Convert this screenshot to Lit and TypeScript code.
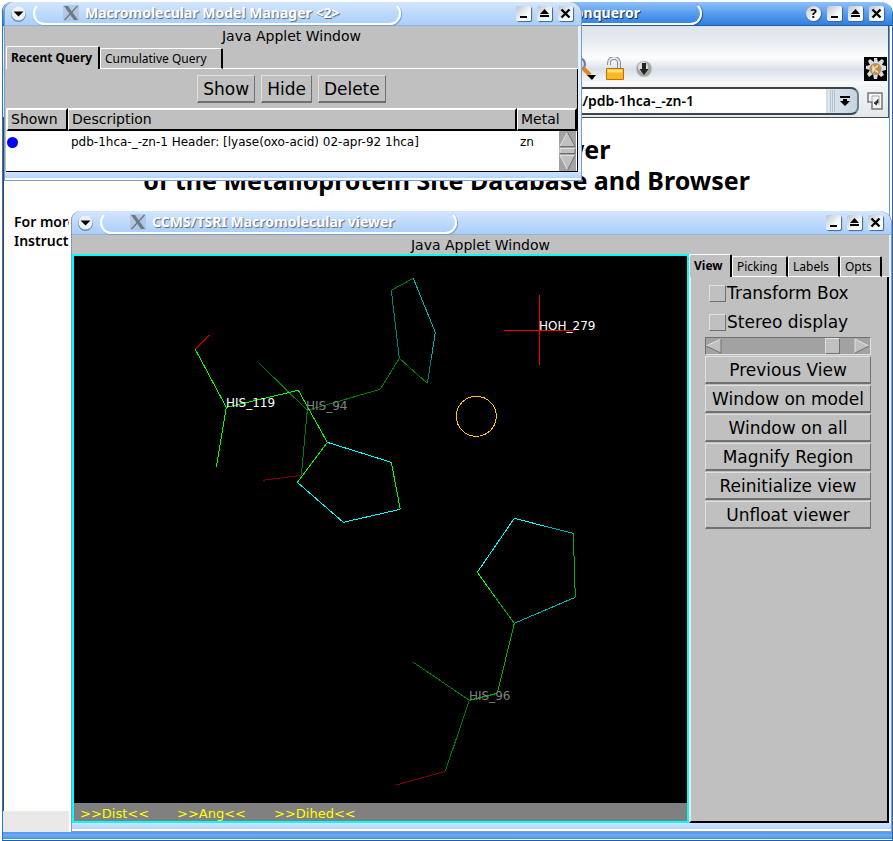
import { LitElement, html, css, svg } from "lit";
import { customElement, property } from "lit/decorators.js";

type Bond = [number, number, number, number, string];

const GREEN = "#00ff00";
const MID_GREEN = "#00b200";
const DARK_GREEN = "#008000";
const CYAN = "#00ffff";
const MID_CYAN = "#00b2b2";
const DARK_CYAN = "#008080";

const BONDS: Bond[] = [
  // HIS 94
  [391, 290, 413, 278, DARK_GREEN],
  [413, 278, 435, 332, MID_CYAN],
  [435, 332, 431, 358, MID_CYAN],
  [431, 358, 427, 383, DARK_CYAN],
  [427, 383, 399, 358, DARK_GREEN],
  [399, 358, 391, 290, DARK_CYAN],
  [399, 358, 380, 389, DARK_GREEN],
  [380, 389, 307, 410, DARK_GREEN],
  [307, 410, 259, 363, DARK_GREEN],
  [307, 410, 301, 475, DARK_GREEN],
  [301, 475, 263, 480, "#800000"],
  // HIS 119
  [195, 349, 209, 335, "#b20000"],
  [195, 349, 226, 407, GREEN],
  [226, 407, 216, 467, GREEN],
  [226, 407, 298, 390, GREEN],
  [298, 390, 327, 442, GREEN],
  [327, 442, 391, 462, CYAN],
  [391, 462, 400, 509, GREEN],
  [400, 509, 343, 522, CYAN],
  [343, 522, 297, 482, CYAN],
  [297, 482, 327, 442, GREEN],
  // HIS 96
  [514, 518, 545, 526, CYAN],
  [545, 526, 573, 533, MID_CYAN],
  [573, 533, 575, 597, MID_GREEN],
  [575, 597, 514, 623, MID_CYAN],
  [514, 623, 495, 597, MID_GREEN],
  [495, 597, 477, 572, GREEN],
  [477, 572, 514, 518, CYAN],
  [514, 623, 497, 693, MID_GREEN],
  [497, 693, 469, 700, MID_GREEN],
  [469, 700, 413, 662, DARK_GREEN],
  [469, 700, 445, 771, DARK_GREEN],
  [445, 771, 395, 785, "#800000"],
  // HOH 279
  [504, 330, 574, 330, "#ff0000"],
  [539, 295, 539, 365, "#ff0000"],
];

const ATOM_LABELS: [number, number, string, string][] = [
  [226, 407, "HIS_119", "#ffffff"],
  [306, 410, "HIS_94", "#808080"],
  [469, 700, "HIS_96", "#808080"],
  [539, 330, "HOH_279", "#ffffff"],
];

const buttonGlyphs: Record<string, unknown> = {
  Minimize: svg`<path d="M4 10h7v2H4z" />`,
  Maximize: svg`<path d="M7.5 3L12 8H3zM3 9h9v2H3z" />`,
  Close: svg`<path d="M3.5 3.5l8 8M11.5 3.5l-8 8" stroke="#000" stroke-width="2.4" />`,
};

@customElement("title-bar")
class TitleBar extends LitElement {
  @property() text = "";
  @property({ type: Boolean, reflect: true }) active = false;

  static styles = css`
    :host {
      display: flex;
      align-items: center;
      box-sizing: border-box;
      height: 24px;
      flex: none;
      padding: 0 8px 0 6px;
      border-radius: 9px 12px 0 0;
      border-bottom: 1px solid #8fb5dc;
      background: linear-gradient(#d3e6fd, #bddafb 50%, #a9cffa);
      font-family: "Noto Sans", sans-serif;
    }
    :host([active]) {
      padding: 0 8px 0 28px;
      border-bottom-color: #1b5dab;
      background: linear-gradient(#8fc1f8, #5da0f0 45%, #2f7fe0);
    }
    .menu {
      width: 15px;
      height: 15px;
      padding: 0;
      border: 0;
      background: none;
      display: block;
    }
    .pill {
      display: flex;
      align-items: center;
      gap: 6px;
      box-sizing: border-box;
      height: 23px;
      margin-left: 7px;
      padding: 0 60px 1px 28px;
      border: 2px solid #fff;
      border-top-color: transparent;
      border-radius: 12px;
      box-shadow: 1px 1px 1px #7d9fc4;
    }
    :host([active]) .pill {
      width: 671px;
      margin-left: 0;
      justify-content: flex-end;
      box-shadow: 1px 1px 1px #1c57a0;
    }
    .text {
      color: #fff;
      font-size: 14px;
      font-weight: 700;
      line-height: 18px;
      white-space: nowrap;
      text-shadow: 1px 1px 1px #56687d;
    }
    :host([active]) .text {
      text-shadow: 1px 1px 1px #102e58;
    }
    .space {
      flex: 1;
    }
    .buttons {
      display: flex;
      gap: 6px;
    }
    .button {
      width: 15px;
      height: 15px;
      padding: 0;
      border: 0;
      border-radius: 2px;
      background: linear-gradient(135deg, #b9c4d0, #f6f8fa 60%, #fff);
      box-shadow: 1px 1px 1px #42648c;
    }
    .help {
      border-radius: 8px;
      font: 700 13px/15px "Noto Sans", sans-serif;
      color: #000;
    }
    .button svg {
      display: block;
    }
  `;

  render() {
    return html`
      ${this.active
        ? null
        : html`<button class="menu" aria-label="Window menu">
            <svg width="15" height="16" viewBox="0 0 15 16">
              <circle cx="7.5" cy="8.5" r="7.5" fill="#6f8dab" />
              <circle cx="7.5" cy="7.5" r="7" fill="#eef2f6" />
              <path d="M2.5 5.5h10l-5 5z" />
            </svg>
          </button>`}
      <div class="pill">
        ${this.active
          ? null
          : html`<svg width="16" height="16" viewBox="0 0 16 16" aria-hidden="true">
              <path d="M0 0h16v16H0z" fill="#a9bdd4" opacity=".6" />
              <path d="M1 1h4l10 14h-4z" fill="#6d7985" />
              <path d="M14.5 1L1.500 15" stroke="#6d7985" stroke-width="1.3" />
            </svg>`}
        <span class="text">${this.text}</span>
      </div>
      <div class="space"></div>
      <div class="buttons">
        ${this.active ? html`<button class="button help" aria-label="Help">?</button>` : null}
        ${Object.entries(buttonGlyphs).map(
          ([name, glyph]) => html`<button class="button" aria-label=${name}>
            <svg width="15" height="15" viewBox="0 0 15 15">${glyph}</svg>
          </button>`,
        )}
      </div>
    `;
  }
}

const sharedStyles = css`
  :host {
    display: flex;
    flex-direction: column;
    box-sizing: border-box;
    border: 1px solid #7c9cc0;
    border-top: 0;
    border-radius: 9px 12px 0 0;
    background: #c0c0c0;
    font-family: "DejaVu Sans", sans-serif;
    color: #000;
  }
  .frame {
    display: flex;
    flex-direction: column;
    flex: 1;
    min-height: 0;
    border-right: 2px solid #e4f0fd;
  }
  .applet {
    flex: none;
    height: 19px;
    text-align: center;
    font-size: 14px;
    line-height: 21px;
  }
  .foot {
    height: 6px;
    flex: none;
    border-bottom: 2px solid #fff;
    background: linear-gradient(#cfe3fd, #b4d5fb);
  }
  .tabs {
    display: flex;
    align-items: flex-end;
  }
  .tabs::after {
    content: "";
    flex: 1;
    border-bottom: 1px solid #fff;
  }
  .tab {
    box-sizing: border-box;
    height: 21px;
    margin: 0;
    padding: 0 0 0 4px;
    border: 0 solid #fff;
    border-top-width: 1px;
    border-left-width: 1px;
    border-bottom-width: 1px;
    border-right: 2px solid #000;
    border-radius: 2px 2px 0 0;
    background: #c0c0c0;
    color: #000;
    font: 400 12px/18px "Noto Sans", sans-serif;
    text-align: left;
    white-space: nowrap;
  }
  .tab.current {
    height: 23px;
    border-bottom: 0;
    font-weight: 700;
  }
  .button {
    box-sizing: border-box;
    height: 28px;
    padding: 0 5px;
    border: 1px solid #e0e0e0;
    border-right-color: #707070;
    border-bottom: 2px solid #707070;
    background: #c0c0c0;
    color: #000;
    font: 400 17px/24px "DejaVu Sans", sans-serif;
    white-space: nowrap;
  }
`;

@customElement("model-manager")
class ModelManager extends LitElement {
  static styles = [
    sharedStyles,
    css`
      .frame {
        border-right-width: 3px;
      }
      .panel {
        display: flex;
        flex-direction: column;
        flex: 1;
        margin-left: 1px;
        border: 0 solid #000;
        border-right-width: 1px;
        border-bottom-width: 1px;
      }
      .tabs {
        margin: 1px 0 0 1px;
      }
      .recent {
        width: 94px;
      }
      .cumulative {
        width: 123px;
      }
      .actions {
        display: flex;
        justify-content: center;
        gap: 6px;
        padding: 6px 0 5px;
      }
      .list {
        position: relative;
        flex: 1;
        border-left: 1px solid #fff;
        background: #fff;
      }
      .table {
        width: 100%;
        border-collapse: separate;
        border-spacing: 0;
        table-layout: fixed;
      }
      .table th {
        box-sizing: border-box;
        height: 23px;
        padding: 0 0 0 3px;
        border: 0 solid #fff;
        border-top-width: 2px;
        border-left-width: 1px;
        border-right: 2px solid #000;
        border-bottom: 2px solid #000;
        background: #c0c0c0;
        font: 400 14px/19px "DejaVu Sans", sans-serif;
        text-align: left;
      }
      .table td {
        height: 22px;
        padding: 0 0 0 3px;
        font: 400 12px/20px "DejaVu Sans", sans-serif;
        white-space: nowrap;
      }
      .table td:first-child {
        padding: 0;
      }
      .shown {
        width: 61px;
      }
      .metal {
        width: 60px;
      }
      .dot {
        display: block;
        width: 11px;
        height: 11px;
        border-radius: 6px;
        background: #00f;
      }
      .scroll {
        position: absolute;
        right: 1px;
        top: 23px;
        bottom: 1px;
      }
    `,
  ];

  render() {
    return html`
      <title-bar text="Macromolecular Model Manager &lt;2&gt;"></title-bar>
      <div class="frame">
        <div class="applet">Java Applet Window</div>
        <div class="tabs">
          <button class="tab current recent">Recent Query</button>
          <button class="tab cumulative">Cumulative Query</button>
        </div>
        <div class="panel">
          <div class="actions">
            <button class="button">Show</button>
            <button class="button">Hide</button>
            <button class="button">Delete</button>
          </div>
          <div class="list">
            <table class="table">
              <thead>
                <tr>
                  <th class="shown">Shown</th>
                  <th>Description</th>
                  <th class="metal">Metal</th>
                </tr>
              </thead>
              <tbody>
                <tr>
                  <td><span class="dot"></span></td>
                  <td>pdb-1hca-_-zn-1 Header: [lyase(oxo-acid) 02-apr-92 1hca]</td>
                  <td>zn</td>
                </tr>
              </tbody>
            </table>
            <svg class="scroll" width="17" height="40" viewBox="0 0 17 40" aria-hidden="true">
              <path d="M0 0h17v40H0z" fill="#a2a2a2" />
              <path d="M8.5 1L1 15h15z" fill="#c0c0c0" />
              <path d="M8.5 1L1 15" stroke="#e0e0e0" />
              <path d="M8.5 1L16 15.5H1" stroke="#707070" fill="none" />
              <path d="M1 17.5h15v5H1z" fill="#c0c0c0" />
              <path d="M1 22V17.5h15" stroke="#e0e0e0" fill="none" />
              <path d="M16 18v4.5H1" stroke="#707070" fill="none" />
              <path d="M1 24.5h15L8.5 39z" fill="#c0c0c0" />
              <path d="M8.5 39L1 24.5h15" stroke="#e0e0e0" fill="none" />
              <path d="M8.5 39L16 24.5" stroke="#707070" />
            </svg>
          </div>
        </div>
      </div>
      <div class="foot"></div>
    `;
  }
}

@customElement("molecule-viewer")
class MoleculeViewer extends LitElement {
  static styles = [
    sharedStyles,
    css`
      .work {
        display: flex;
        flex: 1;
        min-height: 0;
      }
      .canvas {
        display: flex;
        flex-direction: column;
        flex: 1;
        min-width: 0;
        border: 2px solid #0ff;
        background: #000;
      }
      .scene {
        flex: 1;
        min-height: 0;
        width: 100%;
        display: block;
      }
      .scene text {
        font: 400 12px "DejaVu Sans", sans-serif;
      }
      .picks {
        display: flex;
        gap: 28px;
        height: 18px;
        padding: 0 6px;
        background: #808080;
        overflow: hidden;
      }
      .pick {
        height: 18px;
        padding: 0;
        border: 0;
        background: none;
        color: #ff0;
        font: 400 13px/22px "DejaVu Sans", sans-serif;
      }
      .side {
        display: flex;
        flex-direction: column;
        width: 200px;
      }
      .panel {
        flex: 1;
        display: flex;
        flex-direction: column;
        gap: 1px;
        padding: 2px 16px 0 14px;
        border: 0 solid #000;
        border-left: 2px solid #eee;
        border-right-width: 2px;
        border-bottom-width: 2px;
      }
      .view {
        width: 43px;
      }
      .picking {
        width: 56px;
      }
      .labels {
        width: 52px;
      }
      .opts {
        width: 42px;
      }
      .check {
        display: flex;
        align-items: center;
        gap: 1px;
        height: 28px;
        padding-left: 4px;
        font-size: 17px;
        line-height: 24px;
        white-space: nowrap;
      }
      .box {
        appearance: none;
        box-sizing: border-box;
        width: 17px;
        height: 17px;
        margin: 0;
        border: 1px solid #e0e0e0;
        border-right-color: #707070;
        border-bottom-color: #707070;
        flex: none;
      }
      .slider {
        display: flex;
        box-sizing: border-box;
        height: 18px;
        border: 1px solid #707070;
        border-right-color: #e0e0e0;
        border-bottom-color: #e0e0e0;
        background: #a2a2a2;
      }
      .arrow {
        width: 16px;
        height: 16px;
        padding: 0;
        border: 0;
        background: none;
        flex: none;
      }
      .arrow svg {
        display: block;
      }
      .range {
        appearance: none;
        flex: 1;
        min-width: 0;
        height: 16px;
        margin: 0;
        background: none;
      }
      .range::-webkit-slider-thumb {
        appearance: none;
        box-sizing: border-box;
        width: 15px;
        height: 16px;
        border: 1px solid #e0e0e0;
        border-right-color: #707070;
        border-bottom-color: #707070;
        background: #c0c0c0;
      }
      .commands {
        display: flex;
        flex-direction: column;
        gap: 1px;
      }
    `,
  ];

  render() {
    return html`
      <title-bar text="CCMS/TSRI Macromolecular viewer"></title-bar>
      <div class="frame">
        <div class="applet">Java Applet Window</div>
        <div class="work">
          <div class="canvas">
            <svg
              class="scene"
              viewBox="74 256 613 547"
              preserveAspectRatio="xMinYMin meet"
              role="img"
              aria-label="Zinc site model"
            >
              <g shape-rendering="crispEdges" transform="translate(0.3 0.3)">
                ${BONDS.map(
                  ([x1, y1, x2, y2, color]) =>
                    svg`<line x1=${x1} y1=${y1} x2=${x2} y2=${y2} stroke=${color} />`,
                )}
                <circle cx="476" cy="416" r="20" fill="none" stroke="#ffc800" />
              </g>
              ${ATOM_LABELS.map(
                ([x, y, name, color]) => svg`<text x=${x} y=${y} fill=${color}>${name}</text>`,
              )}
            </svg>
            <div class="picks">
              <button class="pick">&gt;&gt;Dist&lt;&lt;</button>
              <button class="pick">&gt;&gt;Ang&lt;&lt;</button>
              <button class="pick">&gt;&gt;Dihed&lt;&lt;</button>
            </div>
          </div>
          <div class="side">
            <div class="tabs">
              <button class="tab current view">View</button>
              <button class="tab picking">Picking</button>
              <button class="tab labels">Labels</button>
              <button class="tab opts">Opts</button>
            </div>
            <div class="panel">
              <label class="check"><input class="box" type="checkbox" />Transform Box</label>
              <label class="check"><input class="box" type="checkbox" />Stereo display</label>
              <div class="slider">
                <button class="arrow" aria-label="Less">
                  <svg width="16" height="16" viewBox="0 0 16 16">
                    <path d="M0 8L15 1v14z" fill="#c0c0c0" />
                    <path d="M0 8L15 1" stroke="#e0e0e0" />
                    <path d="M0 8l15 7V1" stroke="#707070" fill="none" />
                  </svg>
                </button>
                <input class="range" type="range" min="0" max="100" value="88" aria-label="Stereo angle" />
                <button class="arrow" aria-label="More">
                  <svg width="16" height="16" viewBox="0 0 16 16">
                    <path d="M15 8L1 1v14z" fill="#c0c0c0" />
                    <path d="M1 15V1l14 7" stroke="#e0e0e0" fill="none" />
                    <path d="M1 15l14-7" stroke="#707070" />
                  </svg>
                </button>
              </div>
              <div class="commands">
                <button class="button">Previous View</button>
                <button class="button">Window on model</button>
                <button class="button">Window on all</button>
                <button class="button">Magnify Region</button>
                <button class="button">Reinitialize view</button>
                <button class="button">Unfloat viewer</button>
              </div>
            </div>
          </div>
        </div>
      </div>
      <div class="foot"></div>
    `;
  }
}

@customElement("app-root")
class AppRoot extends LitElement {
  static styles = css`
    :host {
      display: block;
      position: relative;
      box-sizing: border-box;
      min-height: 100vh;
      padding: 2px 0 0 2px;
      background: #fff;
      overflow: hidden;
      font-family: "Noto Sans", sans-serif;
      color: #000;
    }
    .browser {
      display: flex;
      flex-direction: column;
      box-sizing: border-box;
      min-height: calc(100vh - 2px);
      border-left: 1px solid #2f72c0;
      border-right: 1px solid #2f66a6;
      border-bottom: 1px solid #1f5fa8;
      border-radius: 9px 12px 0 0;
    }
    .body {
      display: flex;
      flex-direction: column;
      flex: 1;
      margin-right: 2px;
      border-right: 1px solid #5f96d8;
    }
    .tools {
      display: flex;
      align-items: flex-end;
      justify-content: flex-end;
      box-sizing: border-box;
      height: 58px;
      padding: 0 1px 3px 0;
      border-right: 1px solid #555;
      background: linear-gradient(#dde3ea, #e6ebf0 25%, #fdfefe 55%, #d9e0e8 75%, #fbfcfd);
    }
    .tool {
      padding: 0;
      border: 0;
      background: none;
      height: 24px;
    }
    .tool svg {
      display: block;
    }
    .lock {
      margin-left: 9px;
    }
    .down {
      margin: 0 211px 0 10px;
    }
    .address {
      display: flex;
      align-items: center;
      box-sizing: border-box;
      height: 34px;
      padding: 0 5px 0 60px;
      border-right: 1px solid #555;
      border-bottom: 1px solid #444;
      background: linear-gradient(#f4f6f8, #e3e8ed);
    }
    .combo {
      display: flex;
      flex: 1;
      box-sizing: border-box;
      height: 28px;
      border-radius: 0 8px 8px 0;
      background: linear-gradient(90deg, #fff, #eef3f8 94%, #c5d3e0);
      border-top: 2px solid #444;
      border-bottom: 2px solid #3c4650;
      border-right: 2px solid #6c8094;
    }
    .url {
      flex: 1;
      min-width: 0;
      box-sizing: border-box;
      height: 24px;
      padding: 0 132px 0 0;
      border: 0;
      border-right: 2px solid #d8dde2;
      background: #fff;
      color: #000;
      font: 600 14px/20px "Noto Sans", sans-serif;
      text-align: right;
    }
    .drop {
      width: 29px;
      padding: 0;
      border: 0;
      background: none;
    }
    .drop svg,
    .go svg {
      display: block;
    }
    .go {
      margin-left: 8px;
      padding: 0;
      border: 0;
      background: none;
    }
    .page {
      flex: 1;
      border-left: 1px solid #444;
    }
    .heading {
      margin: 16px 0 0;
      text-align: center;
      font-size: 25px;
      font-weight: 700;
      line-height: 31px;
    }
    .note {
      margin: 16px 0 0 10px;
      font-size: 14px;
      font-weight: 600;
      line-height: 19px;
    }
    .status {
      height: 21px;
      flex: none;
      background: #eae9e7;
    }
    .base {
      height: 7px;
      flex: none;
      border-bottom: 1px solid #fff;
      background: linear-gradient(#4f97ea, #6aabf3 50%, #4a90e4);
    }
    .manager {
      position: absolute;
      left: 4px;
      top: 2px;
      width: 578px;
      height: 179px;
    }
    .viewer {
      position: absolute;
      left: 71px;
      top: 211px;
      right: 1px;
      bottom: 9px;
      box-shadow: -2px 0 #fff;
    }
  `;

  render() {
    return html`
      <div class="browser">
        <title-bar active text="Konqueror"></title-bar>
        <div class="body">
          <div class="tools">
            <button class="tool" aria-label="Zoom">
              <svg width="24" height="24" viewBox="0 0 24 24">
                <circle cx="7" cy="7" r="6" fill="#cfd8ee" stroke="#7076a0" stroke-width="2" />
                <path d="M11 11l7 7" stroke="#d98a1e" stroke-width="4" />
                <path d="M15 18h9l-4 5z" />
              </svg>
            </button>
            <button class="tool lock" aria-label="Security">
              <svg width="20" height="24" viewBox="0 0 20 24">
                <path d="M4 8V6a5 5 0 0 1 10 0v6" fill="none" stroke="#8a8fa6" stroke-width="4" />
                <path d="M4 8V6a5 5 0 0 1 10 0v6" fill="none" stroke="#e4e6ee" stroke-width="2" />
                <path d="M1.5 11.5h17v11h-17z" fill="#fbb81f" stroke="#b8700a" />
                <path d="M2.5 12.5h15v3h-15z" fill="#ffe07a" />
              </svg>
            </button>
            <button class="tool down" aria-label="Download">
              <svg width="18" height="24" viewBox="0 0 18 24">
                <circle cx="9" cy="12" r="8" fill="#a4a4a4" stroke="#d0d0d0" />
                <circle cx="8" cy="10" r="5" fill="#dcdcdc" />
                <path d="M7 6h4v6h2.5L9 18l-4.500-6H7z" fill="#222" />
              </svg>
            </button>
            <svg width="23" height="24" viewBox="0 0 23 24" aria-hidden="true">
              <path d="M0 0h23v24H0z" />
              <path
                d="M10 1h3l1 4 4-3 2 2-2 4 4 1v4l-4 1 2 4-3 2-3-3-1 5h-3l-1-5-4 3-2-3 3-4-4-1v-3l4-1-2-4 2-2 4 3z"
                fill="#d8dce2"
              />
              <circle cx="11.5" cy="12" r="6" fill="#bb9152" />
              <path d="M9 8.500v7M14 8.500L9.500 12l4.500 3.500" fill="none" stroke="#f3e4c8" stroke-width="1.5" />
            </svg>
          </div>
          <div class="address">
            <div class="combo">
              <input class="url" type="text" aria-label="Location" value="http://metallo.scripps.edu/current/pdb-1hca-_-zn-1" />
              <button class="drop" aria-label="Show history">
                <svg width="28" height="24" viewBox="0 0 28 24">
                  <path d="M2.5 1v22M4.5 1v22M6.5 1v22" stroke="#b4c2d0" />
                  <path d="M12 7h10v2H12zM15 10h4v2h3l-5 5-5-5h3z" />
                </svg>
              </button>
            </div>
            <button class="go" aria-label="Go">
              <svg width="16" height="18" viewBox="0 0 16 18">
                <path d="M1 1h14v16H5v-7H1z" fill="#f4f6f8" stroke="#777" stroke-width="1.5" />
                <path d="M5 10V4h7v9" fill="none" stroke="#aaa" />
                <path d="M11 7v4H8M9.500 9L7 11l2.500 2z" fill="#222" stroke="#222" stroke-width=".8" />
              </svg>
            </button>
          </div>
          <div class="page">
            <h1 class="heading">Interactive Protein Viewer<br />of the Metalloprotein Site Database and Browser</h1>
            <p class="note">For more<br />Instructions</p>
          </div>
          <div class="status"></div>
        </div>
        <div class="base"></div>
      </div>
      <model-manager class="manager"></model-manager>
      <molecule-viewer class="viewer"></molecule-viewer>
    `;
  }
}
